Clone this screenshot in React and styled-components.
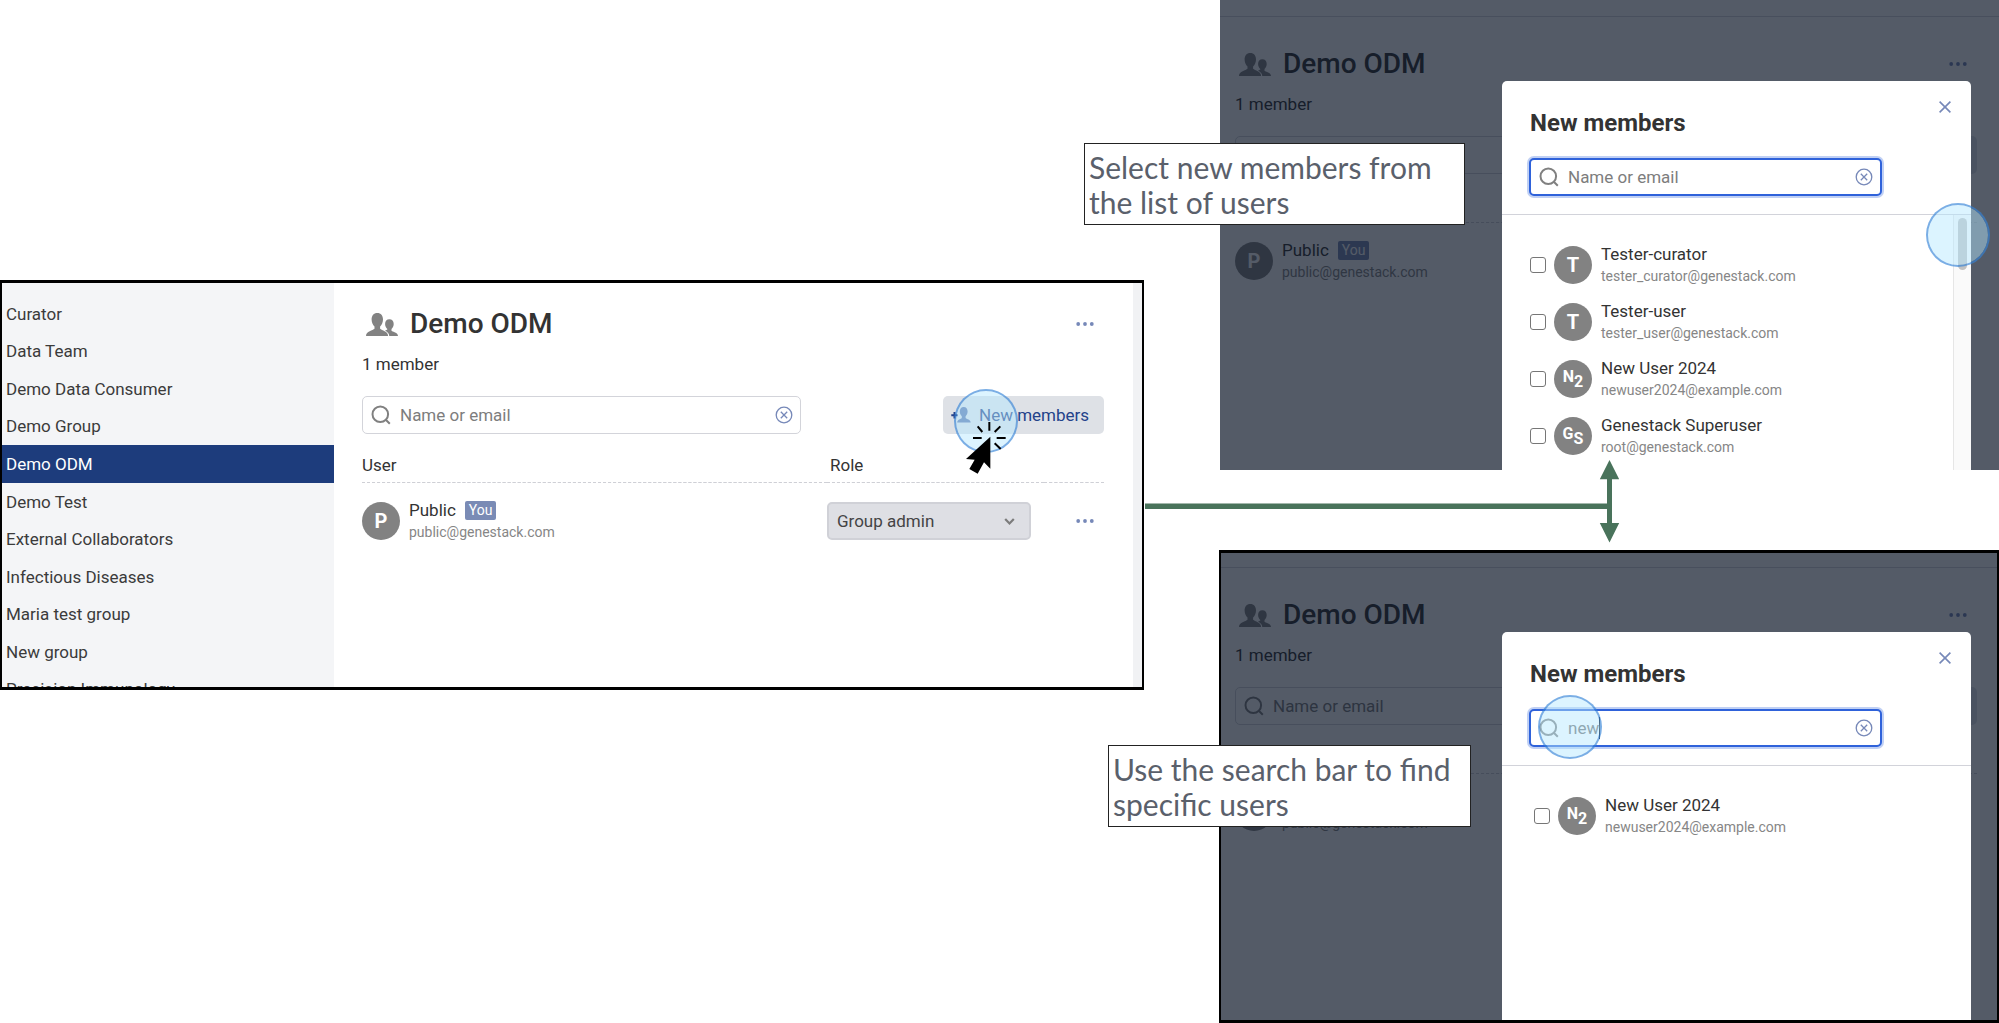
import React, { useId } from "react";
import styled, { createGlobalStyle, css } from "styled-components";

const GlobalStyle = createGlobalStyle`
  *, *::before, *::after { box-sizing: border-box; }
  body {
    margin: 0;
    background: #fff;
    color: #333;
    font-family: Roboto, "Liberation Sans", sans-serif;
    font-size: 17px;
    line-height: 24px;
  }
  button, input, select { font: inherit; color: inherit; }
`;

/* ---------- scene ---------- */

const Scene = styled.main`
  display: grid;
  grid-template-columns: minmax(0, 1144fr) minmax(0, 780fr);
  column-gap: 75px;
  min-height: 100vh;
  overflow: hidden;
`;

const StartColumn = styled.div`
  padding-top: 280px;
`;

const ResultColumn = styled.div`
  position: relative;
  display: flex;
  flex-direction: column;
  gap: 80px;
`;

const Frame = styled.section`
  position: relative;
  ${(p) => (p.$grow ? "flex: 1; display: flex;" : "")}
  ${(p) => (p.$inset ? "padding-left: 1px;" : "")}
`;

const Shot = styled.div`
  position: relative;
  display: flex;
  width: 100%;
  min-height: ${(p) => p.$height}px;
  overflow: hidden;
  background: #fff;
  ${(p) =>
    p.$outlined &&
    css`
      border: solid #000;
      border-width: 3px 2px;
    `}
`;

const Shade = styled.div`
  position: absolute;
  inset: 0;
  background: rgba(12, 21, 39, 0.7);
`;

/* ---------- sidebar ---------- */

const Sidebar = styled.nav`
  flex: 0 0 332px;
  height: 404px;
  padding-top: 12px;
  overflow: hidden;
  background: #f4f5f7;
`;

const GroupList = styled.ul`
  display: flex;
  flex-direction: column;
  height: 413px;
  margin: 0;
  padding: 0;
  list-style: none;
`;

const GroupItem = styled.li`
  display: flex;
  flex: 1;
`;

const GroupLink = styled.a`
  display: flex;
  flex: 1;
  align-items: center;
  padding-left: 4px;
  text-decoration: none;
  color: ${(p) => (p.$active ? "#fff" : "#3b3b3b")};
  background: ${(p) => (p.$active ? "#1d3c7c" : "transparent")};
`;

const ScrollStrip = styled.div`
  flex: 0 0 9px;
  background: #f1f2f4;
`;

/* ---------- group page ---------- */

const PageBody = styled.div`
  flex: 1;
  min-width: 0;
  padding: ${(p) => (p.$cropped ? "21px 29px 0 28px" : "0")};
`;

const PageTop = styled.div`
  height: ${(p) => p.$height}px;
  border-bottom: 1px solid #d5d6dc;
`;

const PageInner = styled.div`
  padding: 27px ${(p) => p.$right}px 0 ${(p) => p.$left}px;
`;

const TitleRow = styled.header`
  display: flex;
  align-items: center;
  height: 40px;
  padding: 0 10px 0 4px;
`;

const Title = styled.h1`
  flex: 1;
  margin: 0 0 0 12px;
  font-size: 28px;
  font-weight: 500;
  line-height: 40px;
`;

const Count = styled.p`
  margin: 8px 0 20px;
`;

const Toolbar = styled.div`
  display: flex;
  justify-content: space-between;
`;

const SearchBox = styled.div`
  display: flex;
  align-items: center;
  width: ${(p) => p.$width}px;
  height: 38px;
  padding: 0 7px 0 8px;
  border-radius: 5px;
  background: #fff;
  border: ${(p) => (p.$focused ? "2px solid #2f62da" : "1px solid #d3d4da")};
  ${(p) => p.$focused && "box-shadow: 0 0 0 2px rgba(47, 98, 218, 0.3);"}
`;

const SearchInput = styled.input`
  ${(p) => (p.$caret ? "field-sizing: content;" : "flex: 1; min-width: 0;")}
  margin-left: 9px;
  padding: 0;
  border: 0;
  outline: 0;
  background: none;
  color: #6f6f6f;
  &::placeholder { color: #7d7d7d; opacity: 1; }
`;

const Caret = styled.span`
  width: 1px;
  height: 22px;
  margin-right: auto;
  background: #333;
`;

const IconButton = styled.button`
  display: flex;
  padding: 0;
  border: 0;
  background: none;
  color: #7688b8;
`;

const NewButton = styled.button`
  display: flex;
  align-items: center;
  gap: 8px;
  width: 161px;
  height: 38px;
  padding: 0 8px;
  border: 0;
  border-radius: 5px;
  background: #dee1e6;
  color: #23428a;
`;

const Members = styled.table`
  width: 100%;
  margin-top: 19px;
  border-collapse: collapse;
  table-layout: fixed;
`;

const HeadRow = styled.tr`
  border-bottom: 1px dashed #cfd0d6;
`;

const HeadCell = styled.th`
  width: ${(p) => p.$width || "auto"};
  padding: 0 0 5px ${(p) => (p.$indent ? 3 : 0)}px;
  font-weight: 400;
  text-align: left;
`;

const Cell = styled.td`
  padding: 19px 0 0;
  vertical-align: top;
`;

const ActionCell = styled.div`
  display: flex;
  align-items: center;
  justify-content: flex-end;
  height: 38px;
  padding-right: 10px;
`;

const RoleField = styled.div`
  position: relative;
  width: 204px;
`;

const RoleSelect = styled.select`
  width: 100%;
  height: 38px;
  padding: 0 8px;
  border: 2px solid #d0d1d7;
  border-radius: 5px;
  background: #dedfe4;
  color: #444;
  appearance: none;
`;

const RoleArrow = styled.svg`
  position: absolute;
  top: 15px;
  right: 16px;
  pointer-events: none;
`;

/* ---------- users ---------- */

const Person = styled.div`
  display: flex;
  align-items: center;
  gap: 9px;
  height: 38px;
`;

const AvatarDisc = styled.span`
  display: flex;
  flex: 0 0 38px;
  justify-content: center;
  align-items: center;
  height: 38px;
  border-radius: 50%;
  background: #828282;
  color: #fff;
  font-size: ${(p) => (p.$pair ? 16 : 20)}px;
  font-weight: 700;
`;

const Initial = styled.span`
  padding-bottom: ${(p) => (p.$low ? 0 : 4)}px;
  padding-top: ${(p) => (p.$low ? 6 : 0)}px;
`;

const Names = styled.div`
  display: flex;
  flex-direction: column;
`;

const NameLine = styled.span`
  display: flex;
  align-items: center;
  gap: 9px;
  line-height: 22px;
`;

const Email = styled.span`
  color: #868686;
  font-size: 14px;
  line-height: 22px;
`;

const YouBadge = styled.span`
  padding: 0 4px;
  border-radius: 2px;
  background: #7a8bb5;
  color: #fff;
  font-size: 14px;
  line-height: 19px;
`;

/* ---------- dialog ---------- */

const Dialog = styled.div`
  position: absolute;
  top: ${(p) => p.$top}px;
  right: ${(p) => p.$right}px;
  bottom: 0;
  display: flex;
  flex-direction: column;
  width: 469px;
  border-radius: 5px 5px 0 0;
  background: #fff;
`;

const DialogHead = styled.div`
  display: flex;
  justify-content: space-between;
  align-items: flex-start;
  padding: 20px 20px 0 28px;
`;

const DialogTitle = styled.h2`
  margin: 6px 0 0;
  font-size: 24px;
  font-weight: 700;
  line-height: 32px;
`;

const DialogSearch = styled.div`
  padding: 19px 27px 18px;
  border-bottom: 1px solid #d2d3da;
`;

const DialogBody = styled.div`
  display: flex;
  flex: 1;
  min-height: 0;
`;

const UserList = styled.ul`
  display: flex;
  flex: 1;
  flex-direction: column;
  gap: 19px;
  margin: 0;
  padding: 31px 0 0 ${(p) => p.$indent}px;
  list-style: none;
`;

const UserOption = styled.label`
  display: flex;
  align-items: center;
  gap: 8px;
`;

const Tick = styled.input`
  width: 16px;
  height: 16px;
  margin: 0;
  border: 1px solid #767676;
  border-radius: 3px;
  background: #fff;
  appearance: none;
`;

const Track = styled.div`
  width: 18px;
  padding: 3px 4px 0;
  border-left: 1px solid #e6e6e6;
  background: #fafafa;
`;

const Thumb = styled.div`
  width: 9px;
  height: 52px;
  border-radius: 5px;
  background: #c1c1c1;
`;

/* ---------- annotations ---------- */

const Callout = styled.p`
  position: absolute;
  top: ${(p) => p.$top}px;
  left: ${(p) => p.$left}px;
  width: ${(p) => p.$width}px;
  height: 82px;
  margin: 0;
  padding: 6px 4px;
  border: 1px solid #222;
  background: #fff;
  color: #5a606b;
  font-family: Lato, sans-serif;
  font-size: 30px;
  line-height: 35px;
`;

const Spot = styled.span`
  position: absolute;
  width: 64px;
  height: 64px;
  border: 2px solid rgba(50, 130, 215, 0.65);
  border-radius: 50%;
  background: rgba(180, 231, 255, 0.465);
  background-clip: padding-box;
  pointer-events: none;
  ${(p) => p.$at}
`;

const Pointer = styled.svg`
  position: absolute;
  top: 140px;
  right: 138px;
  pointer-events: none;
`;

const Connector = styled.svg`
  position: absolute;
  top: 460px;
  left: -74px;
  overflow: visible;
`;

/* ---------- icons ---------- */

const GroupIcon = () => (
  <svg width="32" height="23" viewBox="0 0 32 23" fill="#828282" aria-hidden="true">
    <path d="M11.3 0C14.9 0 17 2.7 17 6.6c0 2.9-1.3 5.6-2.9 6.9v2.3c1.600 1.700 7.900 2.300 8 7.200H0c.1-4.900 6.900-5.500 8.500-7.200v-2.300C6.900 12.200 5.600 9.500 5.600 6.600 5.600 2.700 7.700 0 11.300 0z" />
    <path d="M23.400 6.300c2.700 0 4.300 2 4.300 4.800 0 2-.9 3.900-2.200 4.900v1.700c1.200 1.200 6.400 1.600 6.500 5.300h-8.700c-.2-2.900-2.200-4.400-4.300-5.300 1-.3 1.900-.7 2.300-1.100V16c-1.300-1-2.200-2.900-2.200-4.900 0-2.800 1.600-4.800 4.300-4.800z" />
  </svg>
);

const AddUserIcon = () => (
  <svg width="20" height="16" viewBox="0 0 20 16" fill="#5b74ad" aria-hidden="true">
    <path d="M2.500 5h2v2.200h2.300v2H4.500v2.300h-2V9.200H.3v-2h2.200z" fill="#23428a" />
    <path d="M12.700 0c2.500 0 3.900 1.900 3.900 4.600 0 2-.9 3.800-2 4.700v1.600c1.100 1.200 5 1.500 5.100 4.600H6.200c.1-3.100 3.500-3.400 4.600-4.600V9.300c-1.100-.9-2-2.700-2-4.700C8.800 1.900 10.200 0 12.700 0z" />
  </svg>
);

const SearchIcon = () => (
  <svg width="20" height="20" viewBox="0 0 20 20" fill="none" stroke="#808080" strokeWidth="2" aria-hidden="true">
    <circle cx="9.300" cy="9.300" r="7.800" />
    <path d="M14.500 14.500l4.300 4.300" />
  </svg>
);

const ClearIcon = () => (
  <svg width="18" height="18" viewBox="0 0 18 18" fill="none" stroke="currentColor" strokeWidth="1.300" aria-hidden="true">
    <circle cx="9" cy="9" r="7.800" />
    <path d="M5.800 5.800l6.400 6.400M12.200 5.800l-6.400 6.400" />
  </svg>
);

const CloseIcon = () => (
  <svg width="12" height="12" viewBox="0 0 12 12" fill="none" stroke="currentColor" strokeWidth="1.600" aria-hidden="true">
    <path d="M.6.6l10.800 10.800M11.400.6L.6 11.400" />
  </svg>
);

const DotsIcon = () => (
  <svg width="18" height="4" viewBox="0 0 18 4" fill="currentColor" aria-hidden="true">
    <circle cx="2.200" cy="2" r="1.900" />
    <circle cx="9" cy="2" r="1.900" />
    <circle cx="15.800" cy="2" r="1.900" />
  </svg>
);

/* ---------- parts ---------- */

function Search({ width, label, value, focused, caret }) {
  const id = useId();
  return (
    <SearchBox $width={width} $focused={focused}>
      <SearchIcon />
      <SearchInput
        id={id}
        type="text"
        aria-label={label}
        placeholder="Name or email"
        defaultValue={value}
        $caret={caret}
      />
      {caret && <Caret />}
      <IconButton type="button" aria-label="Clear search">
        <ClearIcon />
      </IconButton>
    </SearchBox>
  );
}

function Avatar({ initials }) {
  if (initials.length === 1) return <AvatarDisc aria-hidden="true">{initials}</AvatarDisc>;
  return (
    <AvatarDisc $pair aria-hidden="true">
      <Initial>{initials[0]}</Initial>
      <Initial $low>{initials[1]}</Initial>
    </AvatarDisc>
  );
}

function UserInfo({ initials, name, email, you }) {
  return (
    <Person>
      <Avatar initials={initials} />
      <Names>
        <NameLine>
          {name}
          {you && <YouBadge>You</YouBadge>}
        </NameLine>
        <Email>{email}</Email>
      </Names>
    </Person>
  );
}

function GroupPage() {
  return (
    <>
      <TitleRow>
        <GroupIcon />
        <Title>Demo ODM</Title>
        <IconButton type="button" aria-label="Group actions">
          <DotsIcon />
        </IconButton>
      </TitleRow>
      <Count>1 member</Count>
      <Toolbar>
        <Search width={439} label="Search group members" />
        <NewButton type="button">
          <AddUserIcon />
          New members
        </NewButton>
      </Toolbar>
      <Members>
        <thead>
          <HeadRow>
            <HeadCell $width="465px">User</HeadCell>
            <HeadCell $indent>Role</HeadCell>
            <HeadCell $width="60px" aria-label="Actions" />
          </HeadRow>
        </thead>
        <tbody>
          <tr>
            <Cell>
              <UserInfo initials="P" name="Public" email="public@genestack.com" you />
            </Cell>
            <Cell>
              <RoleField>
                <RoleSelect aria-label="Role of Public" defaultValue="admin">
                  <option value="admin">Group admin</option>
                </RoleSelect>
                <RoleArrow width="11" height="9" viewBox="0 0 11 9" fill="none" stroke="#7c7c7c" strokeWidth="2.200">
                  <path d="M1.200 2l4.300 4.500L9.800 2" />
                </RoleArrow>
              </RoleField>
            </Cell>
            <Cell>
              <ActionCell>
                <IconButton type="button" aria-label="Member actions">
                  <DotsIcon />
                </IconButton>
              </ActionCell>
            </Cell>
          </tr>
        </tbody>
      </Members>
    </>
  );
}

function MembersDialog({ top, right, query, users, indent, scrollable }) {
  const titleId = useId();
  return (
    <Dialog role="dialog" aria-labelledby={titleId} $top={top} $right={right}>
      <DialogHead>
        <DialogTitle id={titleId}>New members</DialogTitle>
        <IconButton type="button" aria-label="Close">
          <CloseIcon />
        </IconButton>
      </DialogHead>
      <DialogSearch>
        <Search width={353} label="Search users" value={query} focused caret={Boolean(query)} />
      </DialogSearch>
      <DialogBody>
        <UserList $indent={indent}>
          {users.map((user) => (
            <li key={user.email}>
              <UserOption>
                <Tick type="checkbox" />
                <UserInfo {...user} />
              </UserOption>
            </li>
          ))}
        </UserList>
        {scrollable && (
          <Track>
            <Thumb />
          </Track>
        )}
      </DialogBody>
    </Dialog>
  );
}

const groups = [
  "Curator",
  "Data Team",
  "Demo Data Consumer",
  "Demo Group",
  "Demo ODM",
  "Demo Test",
  "External Collaborators",
  "Infectious Diseases",
  "Maria test group",
  "New group",
  "Precision Immunology",
];

const newUser = { initials: "N2", name: "New User 2024", email: "newuser2024@example.com" };

const allUsers = [
  { initials: "T", name: "Tester-curator", email: "tester_curator@genestack.com" },
  { initials: "T", name: "Tester-user", email: "tester_user@genestack.com" },
  newUser,
  { initials: "GS", name: "Genestack Superuser", email: "root@genestack.com" },
];

export default function App() {
  return (
    <>
      <GlobalStyle />
      <Scene>
        <StartColumn>
          <Frame>
            <Shot $height={410} $outlined>
              <Sidebar aria-label="Groups">
                <GroupList>
                  {groups.map((name) => (
                    <GroupItem key={name}>
                      <GroupLink href="#" $active={name === "Demo ODM"}>
                        {name}
                      </GroupLink>
                    </GroupItem>
                  ))}
                </GroupList>
              </Sidebar>
              <PageBody $cropped>
                <GroupPage />
              </PageBody>
              <ScrollStrip />
            </Shot>
            <Spot $at="top: 109px; right: 126px;" />
            <Pointer width="40" height="54" viewBox="110 148 120 162" aria-hidden="true">
              <path d="M183 198v96l-19-19-19 34-25-14 16-28-26-2z" />
              <path
                d="M180 154v26M145 167l14 17M213 167l-17 17M131 202h26M202 202h27M196 218l18 17"
                stroke="#000"
                strokeWidth="6"
                fill="none"
              />
            </Pointer>
          </Frame>
        </StartColumn>

        <ResultColumn>
          <Frame $inset>
            <Shot $height={470}>
              <PageBody>
                <PageTop $height={17} />
                <PageInner $left={15} $right={22}>
                  <GroupPage />
                </PageInner>
              </PageBody>
              <Shade />
              <MembersDialog top={81} right={28} users={allUsers} indent={28} scrollable />
            </Shot>
            <Callout $top={143} $left={-135} $width={381}>
              Select new members from the list of users
            </Callout>
            <Spot $at="top: 203px; right: 9px;" />
          </Frame>

          <Frame $grow>
            <Shot $height={473} $outlined>
              <PageBody>
                <PageTop $height={15} />
                <PageInner $left={14} $right={20}>
                  <GroupPage />
                </PageInner>
              </PageBody>
              <Shade />
              <MembersDialog top={79} right={26} query="new" users={[newUser]} indent={32} />
            </Shot>
            <Callout $top={195} $left={-111} $width={363}>
              Use the search bar to find specific users
            </Callout>
            <Spot $at="top: 145px; right: 397px;" />
          </Frame>

          <Connector width="475" height="83" viewBox="0 0 475 83" fill="#49735b" aria-hidden="true">
            <path d="M0 43.500h462v5.500H0z" />
            <path d="M464.500 0l9.700 19.300h-7.200v43.700h7.200L464.500 82.500l-9.700-19.500h7.200V19.300h-7.200z" />
          </Connector>
        </ResultColumn>
      </Scene>
    </>
  );
}
